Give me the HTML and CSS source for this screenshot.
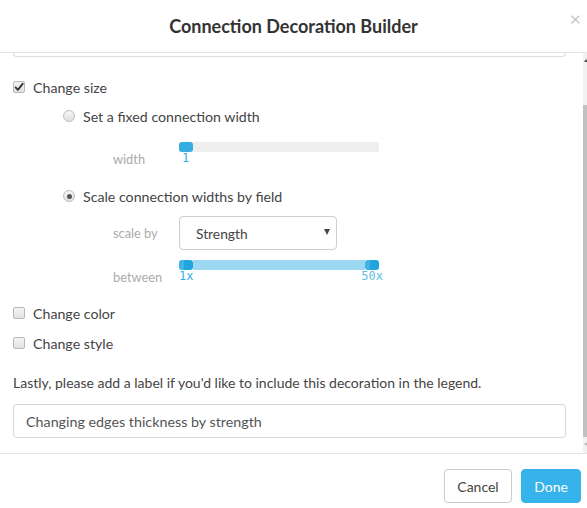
FILE: index.html
```html
<!DOCTYPE html>
<html>
<head>
<meta charset="utf-8">
<link rel="stylesheet" href="styles.css">
</head>
<body>
<div class="modal">
  <header class="hdr">
    <h1 class="title">Connection Decoration Builder</h1>
    <span class="close">×</span>
  </header>
  <div class="body">
    <div class="content">
      <div class="prev-input"></div>

      <div class="opt r-size">
        <span class="cb"><svg width="10" height="10" viewBox="0 0 10 10"><path d="M1.6 5.4 L3.9 7.8 L8.6 1.8" fill="none" stroke="#333" stroke-width="1.9" stroke-linecap="round" stroke-linejoin="round"/></svg></span>
        <span>Change size</span>
      </div>

      <div class="opt sub r-fixed">
        <span class="rb"></span>
        <span>Set a fixed connection width</span>
      </div>

      <div class="field r-width">
        <span class="flabel low">width</span>
        <div class="ctrl">
          <div class="track"><span class="handle"></span></div>
          <div class="vals"><span class="v1">1</span></div>
        </div>
      </div>

      <div class="opt sub r-scale">
        <span class="rb on"><span class="dot"></span></span>
        <span>Scale connection widths by field</span>
      </div>

      <div class="field mid r-scaleby">
        <span class="flabel">scale by</span>
        <div class="select"><span>Strength</span><span class="caret"></span></div>
      </div>

      <div class="field r-between">
        <span class="flabel low">between</span>
        <div class="ctrl">
          <div class="track range"><span class="handle h2"></span><span class="fill"></span><span class="handle h2"></span></div>
          <div class="vals split"><span>1x</span><span class="v50">50x</span></div>
        </div>
      </div>

      <div class="opt r-color">
        <span class="cb"></span>
        <span>Change color</span>
      </div>

      <div class="opt r-style">
        <span class="cb"></span>
        <span>Change style</span>
      </div>

      <p class="note">Lastly, please add a label if you'd like to include this decoration in the legend.</p>

      <div class="text-input">Changing edges thickness by strength</div>
    </div>
    <div class="scrollbar">
      <span class="arr up"></span>
      <div class="thumb"></div>
      <span class="arr down"></span>
    </div>
  </div>
  <footer class="ftr">
    <button class="btn cancel">Cancel</button>
    <button class="btn done">Done</button>
  </footer>
</div>
</body>
</html>
```

FILE: styles.css
```css
* { box-sizing: border-box; }
html, body { margin: 0; padding: 0; background: #fff; }
body { font-family: "Lato", "Helvetica Neue", Arial, sans-serif; color: #444; font-size: 14px; width: 587px; height: 508px; overflow: hidden; }

.modal { width: 587px; height: 508px; display: flex; flex-direction: column; }

.hdr { height: 53px; border-bottom: 1px solid #e5e5e5; display: flex; align-items: center; justify-content: center; position: relative; }
.title { margin: 0; font-size: 18px; font-weight: 700; color: #333; }
.close { position: absolute; right: 6px; top: 6px; font-size: 20px; color: #c8c8c8; line-height: 24px; }

.body { height: 400px; display: flex; }
.content { flex: 1; padding: 0 17px 0 13px; display: flex; flex-direction: column; }

.prev-input { height: 4px; border: 1px solid #ddd; border-top: none; border-radius: 0 0 4px 4px; }

.opt { height: 20px; display: flex; align-items: center; gap: 8px; font-size: 14.2px; color: #444; }
.opt.sub { padding-left: 50px; gap: 8px; }
.r-size { margin-top: 20px; }
.r-fixed { margin-top: 9px; }
.r-scale { margin-top: 19px; }
.r-color { margin-top: 18px; }
.r-style { margin-top: 10px; }

.cb { width: 12px; height: 12px; border: 1px solid #b8b8b8; border-radius: 2px; background: linear-gradient(#f4f4f4, #e2e2e2); display: flex; align-items: center; justify-content: center; flex: none; }
.rb { width: 12px; height: 12px; border: 1px solid #bdbdbd; border-radius: 50%; background: linear-gradient(#f6f6f6, #e0e0e0); display: flex; align-items: center; justify-content: center; flex: none; }
.rb .dot { width: 5px; height: 5px; border-radius: 50%; background: #555; }

.field { display: flex; align-items: flex-start; padding-left: 100px; }
.field.mid { align-items: center; }
.flabel { width: 66px; color: #aaa; font-size: 12.8px; line-height: 16px; }
.flabel.low { margin-top: 9px; }
.r-width { margin-top: 16px; }
.r-scaleby { margin-top: 10px; }
.r-between { margin-top: 10px; }

.ctrl { width: 200px; }
.track { height: 10px; background: #eeeeee; border-radius: 2px; display: flex; }
.handle { width: 14px; height: 10px; background: #35ade3; border-radius: 3px; flex: none; }
.track.range { background: transparent; }
.fill { flex: 1; background: #9dd8f3; }
.handle.h2 { background: linear-gradient(90deg, #3fb2e6 0 35%, #22a5df 35%); }
.vals { font-family: "DejaVu Sans Mono", "Liberation Mono", monospace; font-size: 12px; color: #35ade3; line-height: 12px; height: 12px; display: flex; }
.v1 { padding-left: 3px; }
.vals.split { justify-content: space-between; margin-right: -4px; }
.v50 { color: #5cbfe9; }

.select { width: 158px; height: 34px; border: 1px solid #cfcfcf; border-radius: 4px; display: flex; align-items: center; justify-content: space-between; padding: 0 6px 0 16px; font-size: 13.8px; color: #444; }
.caret { width: 0; height: 0; border-left: 3px solid transparent; border-right: 3px solid transparent; border-top: 6px solid #444; margin-top: -2px; }

.note { margin: 20px 0 0; line-height: 20px; font-size: 14px; color: #444; }

.text-input { margin-top: 11px; height: 34px; border: 1px solid #d6d6d6; border-radius: 4px; display: flex; align-items: center; padding-left: 12px; font-size: 14.3px; color: #555; }

.scrollbar { width: 4px; background: #f1f1f1; display: flex; flex-direction: column; align-items: flex-start; }
.arr { width: 0; height: 0; margin-left: 1px; border-left: 2px solid transparent; border-right: 2px solid transparent; }
.arr.up { margin-top: 6px; border-bottom: 3px solid #555; }
.arr.down { margin-top: 6px; border-top: 3px solid #bbb; }
.thumb { margin-top: 43px; width: 4px; height: 332px; background: #c1c1c1; }

.ftr { flex: 1; border-top: 1px solid #e5e5e5; display: flex; justify-content: flex-end; align-items: flex-start; gap: 9px; padding: 15px 6px 0 0; }
.btn { height: 34px; border-radius: 4px; font-family: inherit; font-size: 14px; padding: 0; cursor: pointer; }
.cancel { width: 68px; background: #fff; border: 1px solid #cccccc; color: #444; }
.done { width: 60px; background: #36b3ea; border: 1px solid #36b3ea; color: #fff; }
```
